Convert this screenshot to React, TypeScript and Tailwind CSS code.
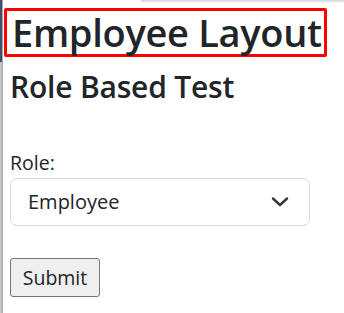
import React from "react";

export default function App() {
  return (
    <div className="relative w-[344px] h-[313px] overflow-hidden bg-white text-[#212529]" style={{ fontFamily: '"Open Sans", "Noto Sans", sans-serif' }}>
      {/* window artifacts */}
      <div className="absolute left-0 top-0 w-[2px] h-[62px] bg-[#44506b]" />
      <div className="absolute left-0 top-[62px] w-[2px] h-[251px] bg-[#c4c4c4]" />
      <div className="absolute left-[2px] top-0 w-[1px] h-[313px] bg-[#a8a8a8]" />
      <div className="absolute left-[141px] top-0 w-[203px] h-[2px] bg-[#dedede]" />

      <div className="flex flex-col items-start pl-[10px] pt-[8px]">
        <h1 className="-ml-[6px] w-[323px] h-[49px] border-[3px] border-[#ff0000] rounded-[2px] pl-[5px] text-[38px] leading-[42px] font-semibold tracking-[-0.3px]">
          Employee Layout
        </h1>
        <h2 className="mt-[12px] text-[30px] leading-[36px] font-semibold tracking-[-0.2px]">Role Based Test</h2>
        <label className="mt-[46px] text-[19.5px] leading-[24px]">Role:</label>
        <div className="mt-[3px] w-[300px] h-[48px] border border-[#d6d8db] rounded-[7px] flex items-center justify-between pl-[17px] pr-[19px]">
          <span className="text-[20px]">Employee</span>
          <svg width="20" height="14" viewBox="0 0 20 14" fill="none">
            <path d="M3 3.5 L10 10 L17 3.5" stroke="#343a40" strokeWidth="2.4" strokeLinecap="round" strokeLinejoin="round" />
          </svg>
        </div>
        <button className="mt-[32px] w-[90px] h-[39px] bg-[#efefef] border border-[#767676] rounded-[3px] text-[19.5px]">
          Submit
        </button>
      </div>
    </div>
  );
}
